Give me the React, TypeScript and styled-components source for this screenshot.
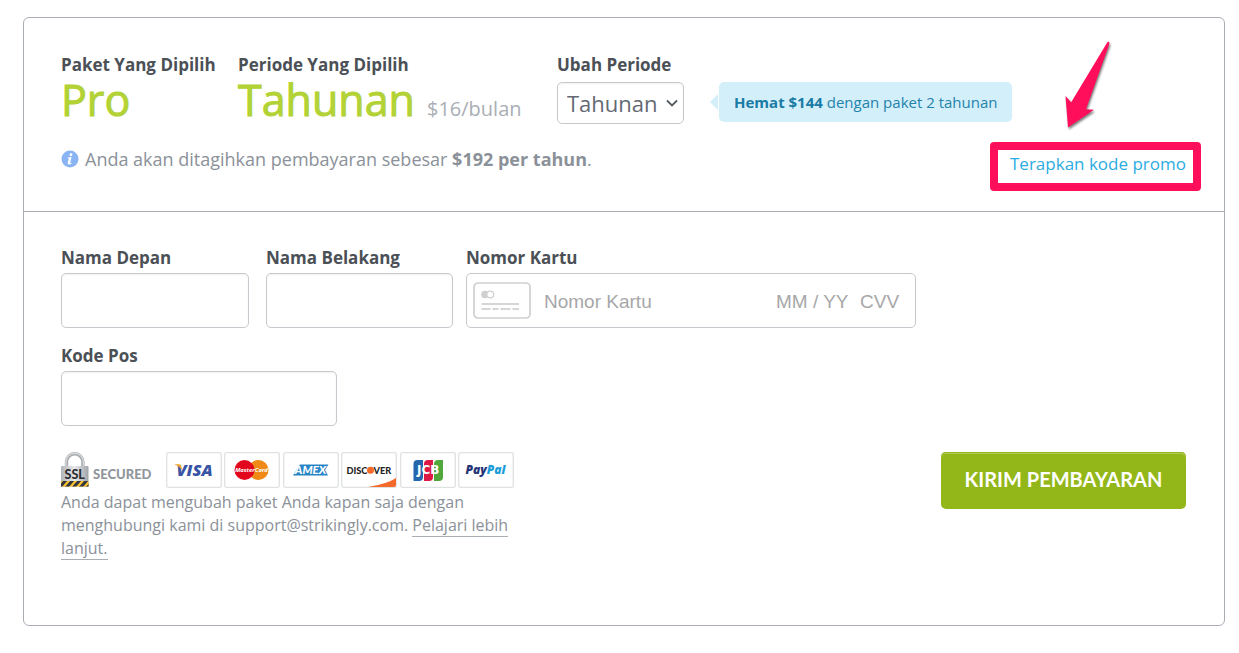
import React from "react";
import styled, { createGlobalStyle } from "styled-components";

const GlobalStyle = createGlobalStyle`
  *, *::before, *::after { box-sizing: border-box; }
  body {
    margin: 0;
    background: #fff;
    color: #8b9199;
    font-family: "Open Sans", "Noto Sans", sans-serif;
  }
`;

const Page = styled.main`
  padding: 17px 14px 28px 23px;
`;

const Panel = styled.form`
  border: 1px solid #a9aeb5;
  border-radius: 6px;
`;

const PlanSection = styled.section`
  padding: 34px 38px 34px 37px;
  border-bottom: 1px solid #a9aeb5;
`;

const PlanRow = styled.div`
  display: flex;
  align-items: flex-start;
`;

const PlanColumn = styled.div<{ $width: number }>`
  flex: none;
  width: ${(p) => p.$width}px;
`;

const Label = styled.label`
  display: block;
  padding-top: 2px;
  font-size: 17px;
  line-height: 22px;
  font-weight: 700;
  color: #4b5056;
  white-space: nowrap;
`;

const PlanValue = styled.div`
  display: flex;
  align-items: baseline;
  gap: 12px;
  font-size: 43px;
  line-height: 48px;
  color: #b2d235;
  -webkit-text-stroke: 1px #b2d235;
`;

const Price = styled.span`
  font-size: 20px;
  color: #a9aeb5;
  -webkit-text-stroke: 0;
`;

const SelectBox = styled.div`
  position: relative;
  width: 127px;
  margin-top: 6px;
`;

const PeriodSelect = styled.select`
  display: block;
  appearance: none;
  width: 100%;
  height: 42px;
  padding: 0 20px 0 9px;
  border: 1px solid #c6c9cd;
  border-radius: 5px;
  background: #fff;
  box-shadow: inset 0 1px 2px #0000000f;
  font: 400 22px/38px "Open Sans", sans-serif;
  color: #636972;
`;

const Chevron = styled.svg`
  position: absolute;
  right: 6px;
  top: 17px;
  pointer-events: none;
`;

const SaveBubble = styled.p`
  position: relative;
  margin: 30px 0 0;
  padding: 10px 15px;
  border-radius: 5px;
  background: #d3effa;
  font-size: 15px;
  line-height: 20px;
  color: #2383ab;
  white-space: nowrap;

  b { color: #1a7ba5; }

  &::before {
    content: "";
    position: absolute;
    left: -9px;
    top: 12px;
    border: 8px solid transparent;
    border-left: 0;
    border-right-color: #d3effa;
  }
`;

const BillingRow = styled.div`
  display: flex;
  justify-content: space-between;
  align-items: flex-start;
  margin-top: 14px;
`;

const BillingNote = styled.p`
  display: flex;
  align-items: center;
  gap: 6px;
  margin: 0;
  font-size: 18px;
  line-height: 24px;
`;

const Promo = styled.div`
  position: relative;
  margin-top: 4px;
  font-size: 17px;
  line-height: 26px;
`;

const PromoLink = styled.a`
  color: #2bace2;
  text-decoration: none;
`;

const Highlight = styled.span`
  position: absolute;
  inset: -9px -15px -14px -20px;
  border: 8px solid #ff0e5c;
  border-radius: 4px;
  pointer-events: none;
`;

const Arrow = styled.svg`
  position: absolute;
  right: 72px;
  bottom: 46px;
  overflow: visible;
  pointer-events: none;
  filter: drop-shadow(1px 2px 1px #00000080);
`;

const PaymentSection = styled.section`
  padding: 33px 38px 65px 37px;
`;

const Fields = styled.div`
  display: flex;
`;

const Field = styled.div<{ $width: number; $gap?: number }>`
  flex: 0 1 ${(p) => p.$width}px;
  min-width: 0;
  margin-right: ${(p) => p.$gap ?? 0}px;
`;

const SecondRow = styled(Fields)`
  margin-top: 15px;
`;

const TextInput = styled.input`
  display: block;
  width: 100%;
  height: 55px;
  margin-top: 4px;
  padding: 0 12px;
  border: 1px solid #c6c9cd;
  border-radius: 5px;
  box-shadow: inset 0 1px 2px #0000000f;
  font: 400 20px "Open Sans", sans-serif;
  color: #4b5056;
`;

const CardBox = styled.div`
  display: flex;
  align-items: center;
  height: 55px;
  margin-top: 4px;
  padding: 0 9px 0 6px;
  border: 1px solid #c6c9cd;
  border-radius: 5px;
`;

const CardInput = styled.input<{ $width?: number }>`
  flex: ${(p) => (p.$width ? `0 0 ${p.$width}px` : "1 1 0")};
  min-width: 0;
  padding: 2px 0 0;
  border: 0;
  outline: 0;
  background: none;
  font: 400 19px/24px "Liberation Sans", Arial, sans-serif;
  color: #4b5056;

  &::placeholder { color: #a7a7a9; opacity: 1; }
`;

const CardIcon = styled.svg`
  flex: none;
  margin-right: 13px;
`;

const Footer = styled.div`
  display: flex;
  justify-content: space-between;
  align-items: flex-start;
  margin-top: 26px;
`;

const Assurance = styled.div`
  width: 456px;
`;

const Badges = styled.div`
  display: flex;
  align-items: flex-end;
  gap: 3px;
`;

const Secured = styled.span`
  display: flex;
  align-items: flex-end;
  gap: 4px;
  width: 102px;
  font: 900 13px/28px Lato, sans-serif;
  color: #8f959b;
`;

const BrandList = styled.span`
  display: flex;
  justify-content: space-between;
  width: 348px;
`;

const Brand = styled.svg`
  flex: none;
`;

const HelpText = styled.p`
  margin: 3px 0 0;
  font-size: 16px;
  line-height: 23px;
`;

const HelpLink = styled.a`
  border-bottom: 1px solid #a9aeb5;
  color: inherit;
  text-decoration: none;
`;

const SubmitButton = styled.button`
  width: 245px;
  height: 57px;
  padding: 0 0 3px;
  border: 0;
  border-radius: 5px;
  background: #93b719;
  box-shadow: inset 0 1px 0 #93b719, inset 0 2px 0 #b0cb57;
  font: 700 20px Lato, sans-serif;
  color: #fff;
  white-space: nowrap;
`;

function InfoIcon() {
  return (
    <svg width="18" height="18" viewBox="0 0 18 18" aria-hidden="true">
      <circle cx="9" cy="9" r="8.5" fill="#8ab4f3" />
      <circle cx="10" cy="4.7" r="1.4" fill="#fff" />
      <path d="M6.7 7.6 10.6 7 9.2 12.4q-.2.9.5.6l1-.6.2.5q-1.500 1.600-3 1.600-1.600 0-1.100-1.900L7.900 8.600l-1.200-.3z" fill="#fff" />
    </svg>
  );
}

function BlankCard() {
  return (
    <CardIcon width="58" height="37" viewBox="0 0 58 37" aria-hidden="true">
      <rect x="1" y="1" width="56" height="35" rx="4" fill="#fff" stroke="#cfcfcf" strokeWidth="1.700" />
      <circle cx="12" cy="12.500" r="3.800" fill="#cfcfcf" />
      <circle cx="17.300" cy="12.500" r="3.400" fill="#fff" stroke="#d2d2d2" strokeWidth="1.300" />
      <path d="M8.500 22H46" stroke="#d6d6d6" strokeWidth="2" />
      <path d="M8.500 27H46" stroke="#d6d6d6" strokeWidth="2" strokeDasharray="9 2 6 2 10 2" />
    </CardIcon>
  );
}

function SslLock() {
  return (
    <Brand width="28" height="36" viewBox="0 0 28 36" aria-hidden="true">
      <defs>
        <linearGradient id="metal">
          <stop offset="0" stopColor="#b2b5b8" />
          <stop offset=".5" stopColor="#e8e9ea" />
          <stop offset="1" stopColor="#a0a4a8" />
        </linearGradient>
        <clipPath id="base"><rect y="29" width="27.500" height="5.500" /></clipPath>
      </defs>
      <path d="M5.500 16V10a8.200 8.200 0 0 1 16.400 0v6" fill="none" stroke="#a8acb0" strokeWidth="3.400" />
      <path d="M5 15V10a8.700 8.700 0 0 1 17.400 0v5" fill="none" stroke="#d5d8da" strokeWidth="1.400" />
      <rect y="14" width="27.500" height="21" rx="1" fill="url(#metal)" />
      <text x="13.700" y="26.500" textAnchor="middle" fontFamily="Lato" fontWeight="900" fontSize="12.500" fill="#2c2f33">SSL</text>
      <g clipPath="url(#base)">
        <rect y="29" width="28" height="6" fill="#f7c02e" />
        <path d="M-2 36 5 28M5 36l7-8M12 36l7-8M19 36l7-8M26 36l7-8" stroke="#33373d" strokeWidth="3" />
      </g>
    </Brand>
  );
}

function BrandCard({ name, children }: { name: string; children: React.ReactNode }) {
  return (
    <Brand width="56" height="36" viewBox="0 0 56 36" role="img" aria-label={name}>
      <rect x=".7" y=".7" width="54.600" height="34.600" rx="2" fill="#fff" stroke="#dfe1e2" strokeWidth="1.300" />
      {children}
    </Brand>
  );
}

function PaymentBrands() {
  return (
    <BrandList>
      <BrandCard name="Visa">
        <text x="28.500" y="24.200" textAnchor="middle" fontFamily="Open Sans" fontStyle="italic" fontWeight="800" fontSize="16.500" fill="#3754a5">VISA</text>
        <path d="M9 12.300h4.500q1.500 0 1.700 1.700l.8 4Q13.500 14 9 12.700z" fill="#f2a531" />
      </BrandCard>
      <BrandCard name="MasterCard">
        <circle cx="34.500" cy="18" r="10" fill="#f08a16" />
        <circle cx="20.500" cy="18" r="10" fill="#e2071d" />
        <text x="27.500" y="20.300" textAnchor="middle" fontFamily="Open Sans" fontStyle="italic" fontWeight="700" fontSize="5.900" fill="#fff">MasterCard</text>
      </BrandCard>
      <BrandCard name="American Express">
        <path d="M10 23.500 17 12.500H45.500L42 18 45 23.500Z" fill="#2683c6" />
        <text x="27.500" y="22.200" textAnchor="middle" fontFamily="Lato" fontStyle="italic" fontWeight="900" fontSize="11.500" fill="#fff">AMEX</text>
      </BrandCard>
      <BrandCard name="Discover">
        <path d="M27 35Q46 32 55 26V33q0 2-2 2z" fill="#f5692a" />
        <text x="5.500" y="21.700" fontFamily="Lato" fontWeight="900" fontSize="9.200" fill="#232323">DISC</text>
        <circle cx="29.500" cy="18.300" r="3.500" fill="#f5692a" />
        <text x="32.500" y="21.700" fontFamily="Lato" fontWeight="900" fontSize="9.200" fill="#232323">VER</text>
      </BrandCard>
      <BrandCard name="JCB">
        <path d="M13.500 12q0-4 4-4h5.500v17q0 4-4 4h-5.500z" fill="#2467ad" />
        <path d="M24 12q0-4 4-4h5v17q0 4-4 4h-5z" fill="#dc1a44" />
        <path d="M34 12q0-4 4-4h5v17q0 4-4 4h-5z" fill="#50a83c" />
        <text x="28.300" y="22.300" textAnchor="middle" fontFamily="DejaVu Sans" fontWeight="700" fontSize="12" fill="#fff">JCB</text>
      </BrandCard>
      <BrandCard name="PayPal">
        <text x="27.500" y="21.500" textAnchor="middle" fontFamily="Open Sans" fontStyle="italic" fontWeight="800" fontSize="12" fill="#253477">Pay<tspan fill="#1b9cd8">Pal</tspan></text>
      </BrandCard>
    </BrandList>
  );
}

export default function App() {
  return (
    <>
      <GlobalStyle />
      <Page>
        <Panel onSubmit={(e) => e.preventDefault()}>
          <PlanSection>
            <PlanRow>
              <PlanColumn $width={177}>
                <Label as="div">Paket Yang Dipilih</Label>
                <PlanValue>Pro</PlanValue>
              </PlanColumn>
              <PlanColumn $width={319}>
                <Label as="div">Periode Yang Dipilih</Label>
                <PlanValue>
                  Tahunan <Price>$16/bulan</Price>
                </PlanValue>
              </PlanColumn>
              <PlanColumn $width={162}>
                <Label htmlFor="period">Ubah Periode</Label>
                <SelectBox>
                  <PeriodSelect id="period" defaultValue="1">
                    <option value="1">Tahunan</option>
                  </PeriodSelect>
                  <Chevron width="12" height="9" viewBox="0 0 12 9" aria-hidden="true">
                    <path d="M1 1.500 6 6.500 11 1.500" fill="none" stroke="#555b63" strokeWidth="1.800" />
                  </Chevron>
                </SelectBox>
              </PlanColumn>
              <SaveBubble>
                <b>Hemat $144</b> dengan paket 2 tahunan
              </SaveBubble>
            </PlanRow>
            <BillingRow>
              <BillingNote>
                <InfoIcon />
                <span>
                  Anda akan ditagihkan pembayaran sebesar <b>$192 per tahun</b>.
                </span>
              </BillingNote>
              <Promo>
                <PromoLink href="#promo">Terapkan kode promo</PromoLink>
                <Highlight />
                <Arrow width="50" height="90" viewBox="0 0 50 90" aria-hidden="true">
                  <path d="M4 86.500 1.500 55 7.200 61.200 43.200 1.500Q44.500 0 45.500 1.500L45 4 22 68.200 30 68.700Z" fill="#ff0e5c" />
                </Arrow>
              </Promo>
            </BillingRow>
          </PlanSection>
          <PaymentSection>
            <Fields>
              <Field $width={188} $gap={17}>
                <Label htmlFor="first">Nama Depan</Label>
                <TextInput id="first" />
              </Field>
              <Field $width={187} $gap={13}>
                <Label htmlFor="last">Nama Belakang</Label>
                <TextInput id="last" />
              </Field>
              <Field $width={450}>
                <Label htmlFor="card">Nomor Kartu</Label>
                <CardBox>
                  <BlankCard />
                  <CardInput id="card" placeholder="Nomor Kartu" />
                  <CardInput $width={84} aria-label="MM / YY" placeholder="MM / YY" />
                  <CardInput $width={46} aria-label="CVV" placeholder="CVV" />
                </CardBox>
              </Field>
            </Fields>
            <SecondRow>
              <Field $width={276}>
                <Label htmlFor="zip">Kode Pos</Label>
                <TextInput id="zip" />
              </Field>
            </SecondRow>
            <Footer>
              <Assurance>
                <Badges>
                  <Secured>
                    <SslLock />
                    SECURED
                  </Secured>
                  <PaymentBrands />
                </Badges>
                <HelpText>
                  Anda dapat mengubah paket Anda kapan saja dengan menghubungi kami di
                  support@strikingly.com. <HelpLink href="#help">Pelajari lebih lanjut.</HelpLink>
                </HelpText>
              </Assurance>
              <SubmitButton type="submit">KIRIM PEMBAYARAN</SubmitButton>
            </Footer>
          </PaymentSection>
        </Panel>
      </Page>
    </>
  );
}
